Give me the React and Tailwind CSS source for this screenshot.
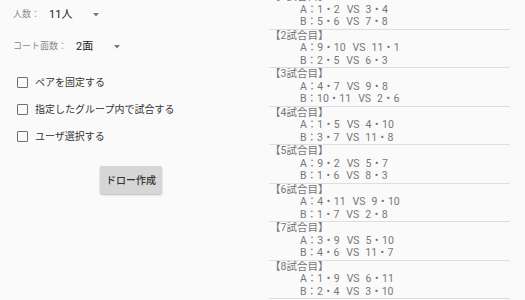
import React from "react";

const matches = [
  { a: "1・2 VS 3・4", b: "5・6 VS 7・8" },
  { a: "9・10 VS 11・1", b: "2・5 VS 6・3" },
  { a: "4・7 VS 9・8", b: "10・11 VS 2・6" },
  { a: "1・5 VS 4・10", b: "3・7 VS 11・8" },
  { a: "9・2 VS 5・7", b: "1・6 VS 8・3" },
  { a: "4・11 VS 9・10", b: "1・7 VS 2・8" },
  { a: "3・9 VS 5・10", b: "4・6 VS 11・7" },
  { a: "1・9 VS 6・11", b: "2・4 VS 3・10" },
];

const options = ["ペアを固定する", "指定したグループ内で試合する", "ユーザ選択する"];

function Arrow() {
  return (
    <svg width="6" height="4" viewBox="0 0 6 4" className="shrink-0">
      <polygon points="0,0 6,0 3,3.5" fill="#7a7a7a" />
    </svg>
  );
}

function SpinnerRow({ label, value, width }) {
  return (
    <div className="flex items-center h-[12px]">
      <span className="text-[9px] text-[#8a8a8a] whitespace-nowrap">{label}</span>
      <span className={`ml-[9px] text-[11px] text-[#212121] ${width}`}>{value}</span>
      <Arrow />
    </div>
  );
}

// fullwidth punctuation gets a fixed 1em box
function Wide({ children }) {
  return <span className="inline-block w-[10.5px] text-center">{children}</span>;
}

function Pair({ text }) {
  const [x, y] = text.split("・");
  return (
    <span>
      {x}
      <Wide>・</Wide>
      {y}
    </span>
  );
}

function Court({ name, game }) {
  const [left, right] = game.split(" VS ");
  return (
    <div className="flex pl-[31px]">
      <span>{name}</span>
      <Wide>：</Wide>
      <Pair text={left} />
      <span className="ml-[7px] mr-[6px]">VS</span>
      <Pair text={right} />
    </div>
  );
}

export default function App() {
  return (
    <div
      className="flex w-[525px] h-[300px] overflow-hidden bg-[#fafafa]"
      style={{ fontFamily: "Roboto, 'Noto Sans CJK JP', sans-serif" }}
    >
      {/* settings */}
      <div className="w-[262px] shrink-0 pl-[13px] flex flex-col">
        <div className="mt-[9px]">
          <SpinnerRow label="人数：" value="11人" width="w-[44px]" />
        </div>
        <div className="mt-[20px]">
          <SpinnerRow label="コート面数：" value="2面" width="w-[38px]" />
        </div>

        <div className="mt-[24px] ml-[4px] flex flex-col gap-[16px]">
          {options.map((opt) => (
            <label key={opt} className="flex items-center h-[11px]">
              <span className="w-[11px] h-[11px] border-[1.5px] border-[#6f6f6f] rounded-[1px] shrink-0" />
              <span className="ml-[7px] text-[10px] text-[#333333] whitespace-nowrap">{opt}</span>
            </label>
          ))}
        </div>

        <button className="mt-[24px] ml-[87px] w-[62px] h-[28px] rounded-[2px] bg-[#d6d6d6] text-[10px] font-medium text-[#333333] shadow-[0_1px_2px_rgba(0,0,0,0.25)]">
          ドロー作成
        </button>
      </div>

      {/* draw result */}
      <div className="flex-1 pl-[7px] pr-[15px]">
        <div className="-mt-[9px]">
          {matches.map((m, i) => (
            <div key={i} className="border-b border-[#dedede] text-[10.5px] leading-[12.5px] text-[#767676] whitespace-nowrap">
              <div className="pl-[1px]">【{i + 1}試合目】</div>
              <Court name="A" game={m.a} />
              <Court name="B" game={m.b} />
            </div>
          ))}
        </div>
      </div>
    </div>
  );
}
